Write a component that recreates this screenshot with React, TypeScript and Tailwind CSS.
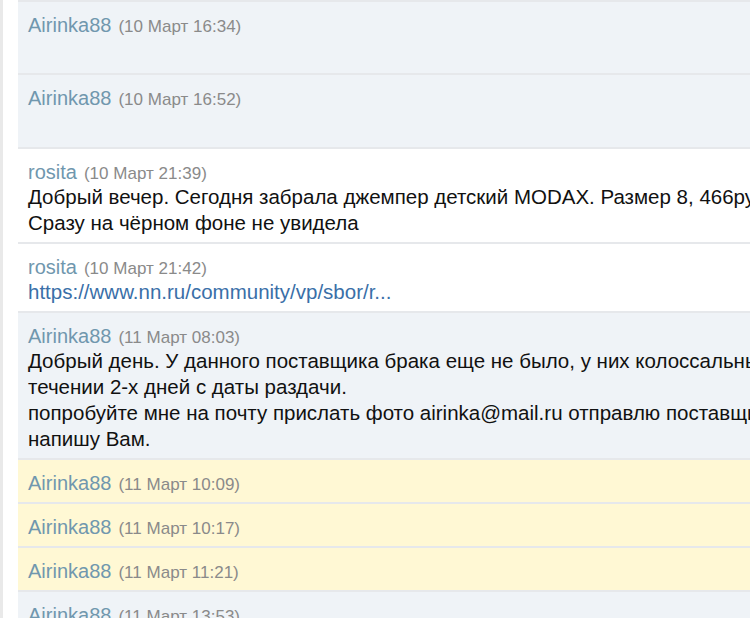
import React from "react";

type Row = {
  name: string;
  date: string;
  bg: "blue" | "white" | "yellow";
  lines?: React.ReactNode[];
  empty?: number;
};

const rows: Row[] = [
  { name: "Airinka88", date: "(10 Март 16:34)", bg: "blue", empty: 36 },
  { name: "Airinka88", date: "(10 Март 16:52)", bg: "blue", empty: 37 },
  {
    name: "rosita",
    date: "(10 Март 21:39)",
    bg: "white",
    lines: [
      "Добрый вечер. Сегодня забрала джемпер детский MODAX. Размер 8, 466руб. Брак",
      "Сразу на чёрном фоне не увидела",
    ],
  },
  {
    name: "rosita",
    date: "(10 Март 21:42)",
    bg: "white",
    lines: [
      <a key="l" className="text-[#3a6fa8]">
        https://www.nn.ru/community/vp/sbor/r...
      </a>,
    ],
  },
  {
    name: "Airinka88",
    date: "(11 Март 08:03)",
    bg: "blue",
    lines: [
      "Добрый день. У данного поставщика брака еще не было, у них колоссальные объемы, обмен в",
      "течении 2-х дней с даты раздачи.",
      "попробуйте мне на почту прислать фото airinka@mail.ru отправлю поставщику, как ответят",
      "напишу Вам.",
    ],
  },
  { name: "Airinka88", date: "(11 Март 10:09)", bg: "yellow" },
  { name: "Airinka88", date: "(11 Март 10:17)", bg: "yellow" },
  { name: "Airinka88", date: "(11 Март 11:21)", bg: "yellow" },
  { name: "Airinka88", date: "(11 Март 13:53)", bg: "blue", empty: 36 },
];

function bgClass(bg: Row["bg"]) {
  if (bg === "blue") return "bg-[#eff3f7]";
  if (bg === "yellow") return "bg-[#fff8d4]";
  return "bg-white";
}

export default function App() {
  return (
    <div
      className="w-[750px] h-[618px] overflow-hidden bg-white flex"
      style={{ fontFamily: '"Liberation Sans", Arial, sans-serif' }}
    >
      <div className="w-[3px] shrink-0 bg-[#e9e9e9]" />
      <div className="w-[15px] shrink-0 bg-white" />
      <div className="flex-1 min-w-0 flex flex-col">
        {rows.map((r, i) => (
          <div
            key={i}
            className={`border-t-2 border-[#e6e8eb] ${bgClass(r.bg)} pl-[10px] pt-[11px] ${
              r.lines ? "pb-[6px]" : "pb-[7px]"
            }`}
          >
            <div className="h-[24px] leading-[24px] whitespace-nowrap">
              <span className="text-[20px] text-[#7097ae]">{r.name}</span>
              <span className="ml-[7px] text-[17px] text-[#8a8a8a]">{r.date}</span>
            </div>
            {r.lines &&
              r.lines.map((l, j) => (
                <div
                  key={j}
                  className="h-[26px] leading-[26px] text-[20.5px] text-[#111111] whitespace-nowrap"
                >
                  {l}
                </div>
              ))}
            {r.empty && <div style={{ height: r.empty - 7 }} />}
          </div>
        ))}
      </div>
    </div>
  );
}
